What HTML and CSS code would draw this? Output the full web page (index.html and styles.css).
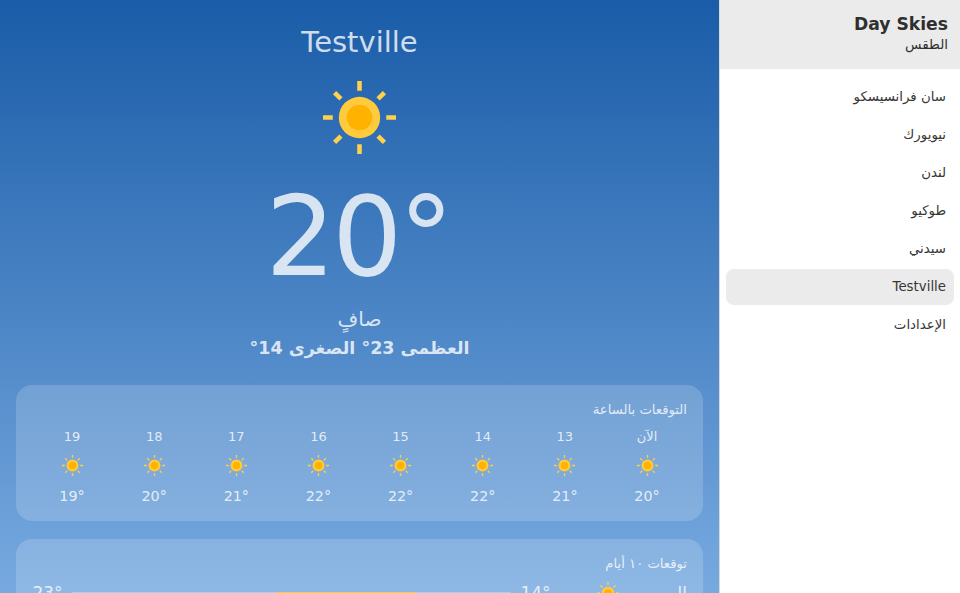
FILE: index.html
```html
<!DOCTYPE html>
<html lang="ar" dir="rtl">
<head>
<meta charset="utf-8">
<title>Day Skies</title>
<link rel="stylesheet" href="styles.css">
</head>
<body>
<svg class="defs" width="0" height="0" aria-hidden="true">
  <symbol id="sun" viewBox="0 0 24 24">
    <g stroke="#ffd04a" stroke-width="1.5" fill="none">
      <path d="M12 0v3.2M12 20.8V24M0 12h3.2M20.8 12H24M3.8 3.8l2.1 2.1M18.1 18.1l2.1 2.1M20.2 3.8l-2.1 2.1M5.9 18.1l-2.1 2.1"/>
    </g>
    <circle cx="12" cy="12" r="6.8" fill="#ffcb3d"/>
    <circle cx="12" cy="12" r="4.2" fill="#ffb300"/>
  </symbol>
</svg>
<div class="app">
  <main class="main">
    <header class="hero">
      <h1 class="city">Testville</h1>
      <svg class="hero-icon"><use href="#sun"/></svg>
      <div class="temp"><bdi>20°</bdi></div>
      <div class="cond">صافٍ</div>
      <div class="range">العظمى 23° الصغرى 14°</div>
    </header>
    <section class="card card-hours">
      <h2 class="card-title">التوقعات بالساعة</h2>
      <div class="hours">
        <div class="hour"><span class="h-label">الآن</span><svg class="h-icon"><use href="#sun"/></svg><span class="h-temp">20°</span></div>
        <div class="hour"><span class="h-label">13</span><svg class="h-icon"><use href="#sun"/></svg><span class="h-temp">21°</span></div>
        <div class="hour"><span class="h-label">14</span><svg class="h-icon"><use href="#sun"/></svg><span class="h-temp">22°</span></div>
        <div class="hour"><span class="h-label">15</span><svg class="h-icon"><use href="#sun"/></svg><span class="h-temp">22°</span></div>
        <div class="hour"><span class="h-label">16</span><svg class="h-icon"><use href="#sun"/></svg><span class="h-temp">22°</span></div>
        <div class="hour"><span class="h-label">17</span><svg class="h-icon"><use href="#sun"/></svg><span class="h-temp">21°</span></div>
        <div class="hour"><span class="h-label">18</span><svg class="h-icon"><use href="#sun"/></svg><span class="h-temp">20°</span></div>
        <div class="hour"><span class="h-label">19</span><svg class="h-icon"><use href="#sun"/></svg><span class="h-temp">19°</span></div>
      </div>
    </section>
    <section class="card">
      <h2 class="card-title">توقعات ١٠ أيام</h2>
      <div class="day">
        <span class="d-name">اليوم</span>
        <svg class="d-icon"><use href="#sun"/></svg>
        <span class="d-low">14°</span>
        <div class="bar"><div class="bar-fill"></div></div>
        <span class="d-high">23°</span>
      </div>
    </section>
  </main>
  <aside class="side">
    <div class="brand">
      <div class="brand-name" dir="ltr">Day Skies</div>
      <div class="brand-sub">الطقس</div>
    </div>
    <nav class="nav">
      <a class="nav-item">سان فرانسيسكو</a>
      <a class="nav-item">نيويورك</a>
      <a class="nav-item">لندن</a>
      <a class="nav-item">طوكيو</a>
      <a class="nav-item">سيدني</a>
      <a class="nav-item active">Testville</a>
      <a class="nav-item">الإعدادات</a>
    </nav>
  </aside>
</div>
</body>
</html>
```
FILE: styles.css
```css
* { box-sizing: border-box; }
html, body { margin: 0; height: 100%; overflow: hidden; }
body { font-family: "DejaVu Sans", sans-serif; background: #fff; }
.defs { position: absolute; }
.app { display: flex; height: 593px; direction: ltr; }
.main {
  width: 719px; flex: none; height: 593px; overflow: hidden; direction: rtl;
  padding: 0 16px;
  background: linear-gradient(180deg, #1a5ca8 0%, #7fb0e4 100%);
  background-size: 100% 640px;
}
.hero { display: flex; flex-direction: column; align-items: center; color: rgba(255,255,255,.8); }
.city { margin: 24px 0 0; font-size: 29px; line-height: 36px; font-weight: 400; }
.hero-icon { width: 73px; height: 73px; margin-top: 21px; }
.temp { font-size: 110px; line-height: 122px; font-weight: 400; letter-spacing: -3.3px; margin: 22px 3px 0 0; }
.cond { font-size: 20px; line-height: 28px; margin-top: 7px; }
.range { font-size: 17.5px; line-height: 20px; font-weight: 700; margin-top: 5px; }
.card { background: rgba(255,255,255,.17); border-radius: 16px; padding: 17px 16px 16px; margin-bottom: 18px; color: rgba(255,255,255,.8); }
.card-hours { margin-top: 27px; height: 136px; }
.card-title { margin: 0; font-size: 13.2px; line-height: 16px; font-weight: 400; }
.hours { display: flex; justify-content: space-between; margin-top: 11px; }
.hour { width: 80px; flex: none; display: flex; flex-direction: column; align-items: center; }
.h-label { font-size: 13px; line-height: 16px; }
.h-icon { width: 21px; height: 21px; margin-top: 10px; }
.h-temp { font-size: 14.3px; line-height: 20px; margin-top: 10px; }
.day { display: flex; align-items: center; margin-top: 9px; height: 24px; }
.d-name { width: 68px; font-size: 17px; }
.d-icon { width: 22px; height: 22px; margin-left: 46px; }
.d-low, .d-high { font-size: 17px; width: 31px; text-align: center; }
.bar { flex: 1; height: 3px; background: rgba(255,255,255,.3); margin: 0 9px; position: relative; }
.bar-fill { position: absolute; left: 204px; width: 140px; top: 0; bottom: 0; background: #ffcb3d; }
.side { width: 241px; flex: none; border-left: 1px solid #d9d9d9; background: #fff; direction: rtl; color: #2b2b2b; height: 593px; opacity: .98; }
.brand { background: #ebebeb; height: 69px; padding: 13px 12px 0; text-align: right; }
.brand-name { font-size: 17.2px; line-height: 22px; font-weight: 700; }
.brand-sub { font-size: 13.5px; line-height: 18px; }
.nav { padding: 10px 6px; display: flex; flex-direction: column; gap: 2px; }
.nav-item { height: 36px; line-height: 36px; padding: 0 8px; font-size: 13.33px; border-radius: 8px; color: #333; }
.active { background: #ebebeb; }
```
